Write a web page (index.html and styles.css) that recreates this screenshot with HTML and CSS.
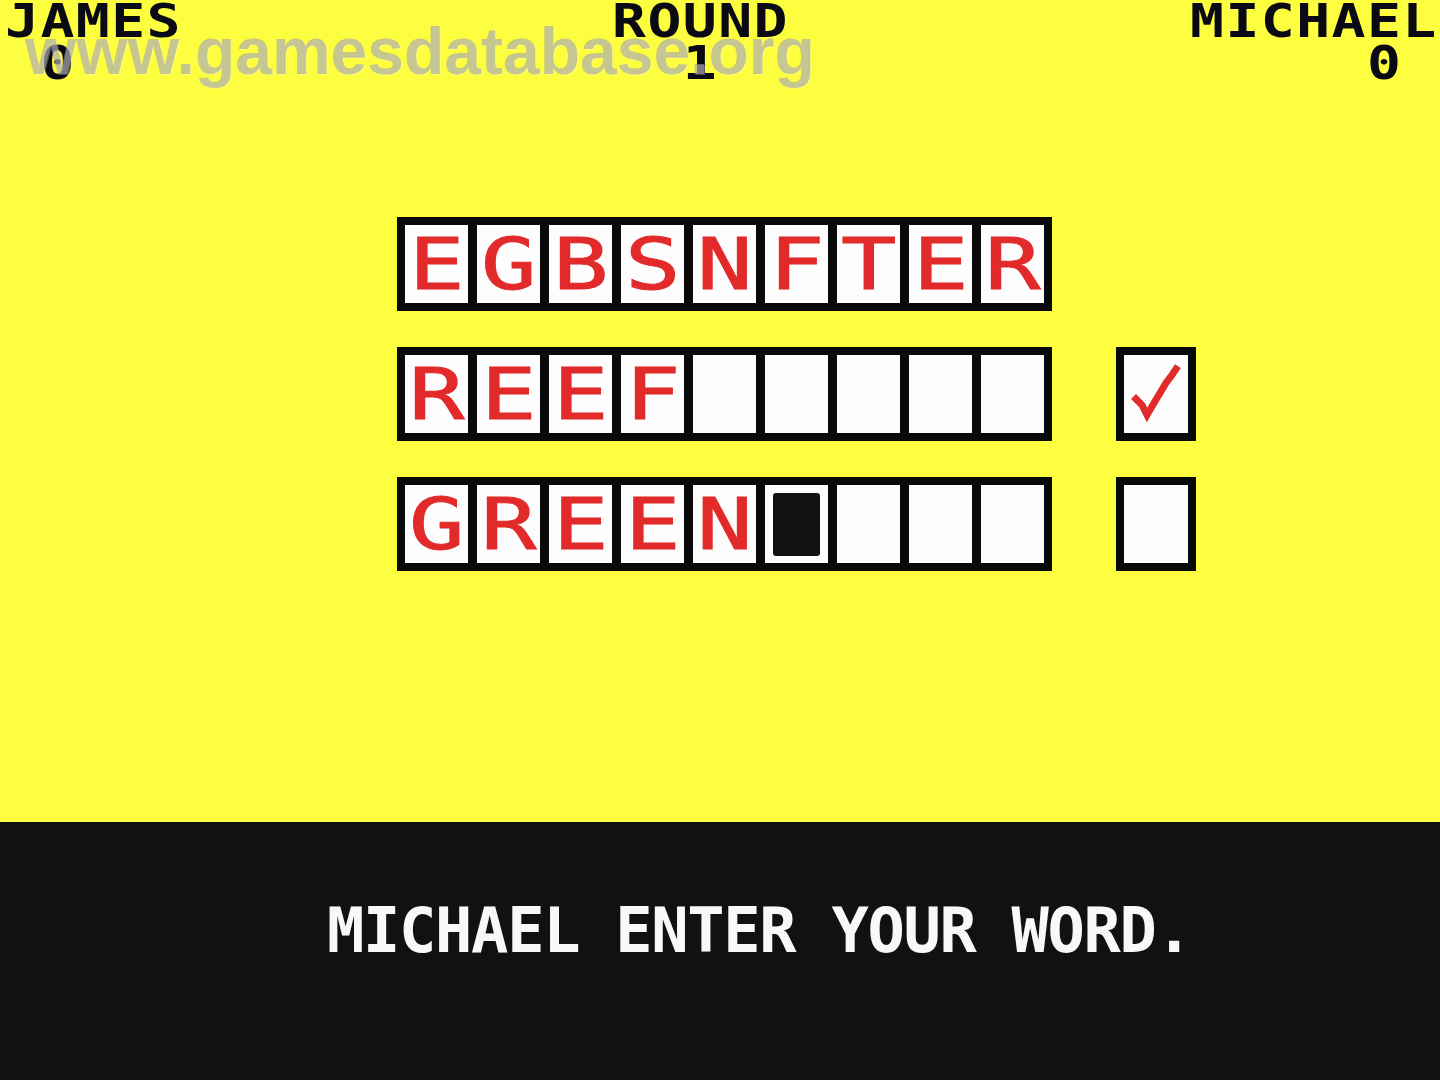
FILE: index.html
```html
<!DOCTYPE html>
<html>
<head>
<meta charset="utf-8">
<link rel="stylesheet" href="styles.css">
</head>
<body>
<div class="screen">
  <div class="top">
    <div class="header">
      <div class="col"><div class="line">JAMES</div><div class="line"> 0</div></div>
      <div class="col"><div class="line">ROUND</div><div class="line">  1</div></div>
      <div class="col"><div class="line">MICHAEL</div><div class="line">     0</div></div>
    </div>
    <div class="board">
      <div class="row">
        <div class="frame">
          <div class="cell"><span class="ch">E</span></div>
          <div class="cell"><span class="ch">G</span></div>
          <div class="cell"><span class="ch">B</span></div>
          <div class="cell"><span class="ch">S</span></div>
          <div class="cell"><span class="ch">N</span></div>
          <div class="cell"><span class="ch">F</span></div>
          <div class="cell"><span class="ch">T</span></div>
          <div class="cell"><span class="ch">E</span></div>
          <div class="cell"><span class="ch">R</span></div>
        </div>
      </div>
      <div class="row">
        <div class="frame">
          <div class="cell"><span class="ch">R</span></div>
          <div class="cell"><span class="ch">E</span></div>
          <div class="cell"><span class="ch">E</span></div>
          <div class="cell"><span class="ch">F</span></div>
          <div class="cell"></div>
          <div class="cell"></div>
          <div class="cell"></div>
          <div class="cell"></div>
          <div class="cell"></div>
        </div>
        <div class="frame check">
          <div class="cell">
            <svg width="64" height="78" viewBox="0 0 64 78">
              <polyline points="12,44 18,50 23,60 30,48 36,38 42,28 48,20 52,14" fill="none" stroke="#e22a2a" stroke-width="7" stroke-linejoin="miter" stroke-linecap="square"/>
            </svg>
          </div>
        </div>
      </div>
      <div class="row">
        <div class="frame">
          <div class="cell"><span class="ch">G</span></div>
          <div class="cell"><span class="ch">R</span></div>
          <div class="cell"><span class="ch">E</span></div>
          <div class="cell"><span class="ch">E</span></div>
          <div class="cell"><span class="ch">N</span></div>
          <div class="cell"><div class="cursor"></div></div>
          <div class="cell"></div>
          <div class="cell"></div>
          <div class="cell"></div>
        </div>
        <div class="frame check">
          <div class="cell"></div>
        </div>
      </div>
    </div>
    <div class="watermark">www.gamesdatabase.org</div>
  </div>
  <div class="bottom">
    <div class="prompt">MICHAEL ENTER YOUR WORD.</div>
  </div>
</div>
</body>
</html>
```

FILE: styles.css
```css
html, body {
  margin: 0;
  padding: 0;
}
body {
  background: #111111;
  font-family: "DejaVu Sans Mono", "Liberation Mono", monospace;
  font-weight: bold;
}
.screen {
  width: 1440px;
  height: 1080px;
  display: flex;
  flex-direction: column;
  overflow: hidden;
}
.top {
  height: 822px;
  background: #fefe40;
  position: relative;
  flex: none;
}
.header {
  display: grid;
  grid-template-columns: 607px 578px auto;
  padding-left: 5px;
  height: 84px;
}
.line {
  font-size: 47px;
  line-height: 42px;
  height: 42px;
  letter-spacing: 1.2px;
  white-space: pre;
  color: #0a0a14;
  transform: scaleX(1.2);
  transform-origin: left center;
}
.board {
  margin-top: 133px;
  padding-left: 397px;
  display: flex;
  flex-direction: column;
  gap: 36px;
}
.row {
  display: flex;
  gap: 64px;
}
.frame {
  background: #0a0a0a;
  padding: 8px;
  display: flex;
  gap: 9px;
}
.cell {
  width: 63px;
  height: 78px;
  background: #fdfdfd;
  display: flex;
  align-items: center;
  justify-content: center;
}
.check .cell {
  width: 64px;
}
.ch {
  display: inline-block;
  font-size: 72px;
  line-height: 72px;
  font-weight: normal;
  color: #e22a2a;
  transform: scaleX(1.28);
  -webkit-text-stroke: 1px #e22a2a;
}
.cursor {
  width: 47px;
  height: 63px;
  background: #111111;
  border-radius: 3px;
}
.watermark {
  position: absolute;
  left: 25px;
  top: 18px;
  font-family: "Liberation Sans", Arial, sans-serif;
  font-weight: bold;
  font-size: 66px;
  line-height: 66px;
  color: rgba(160, 160, 170, 0.6);
  text-shadow: 1px 1px 0 rgba(255, 255, 255, 0.25);
  white-space: nowrap;
}
.bottom {
  flex: 1;
  background: #111111;
  padding-top: 78px;
  padding-left: 327px;
}
.prompt {
  font-size: 62px;
  line-height: 62px;
  letter-spacing: -1.3px;
  color: #f8f8f8;
  white-space: pre;
}
```
